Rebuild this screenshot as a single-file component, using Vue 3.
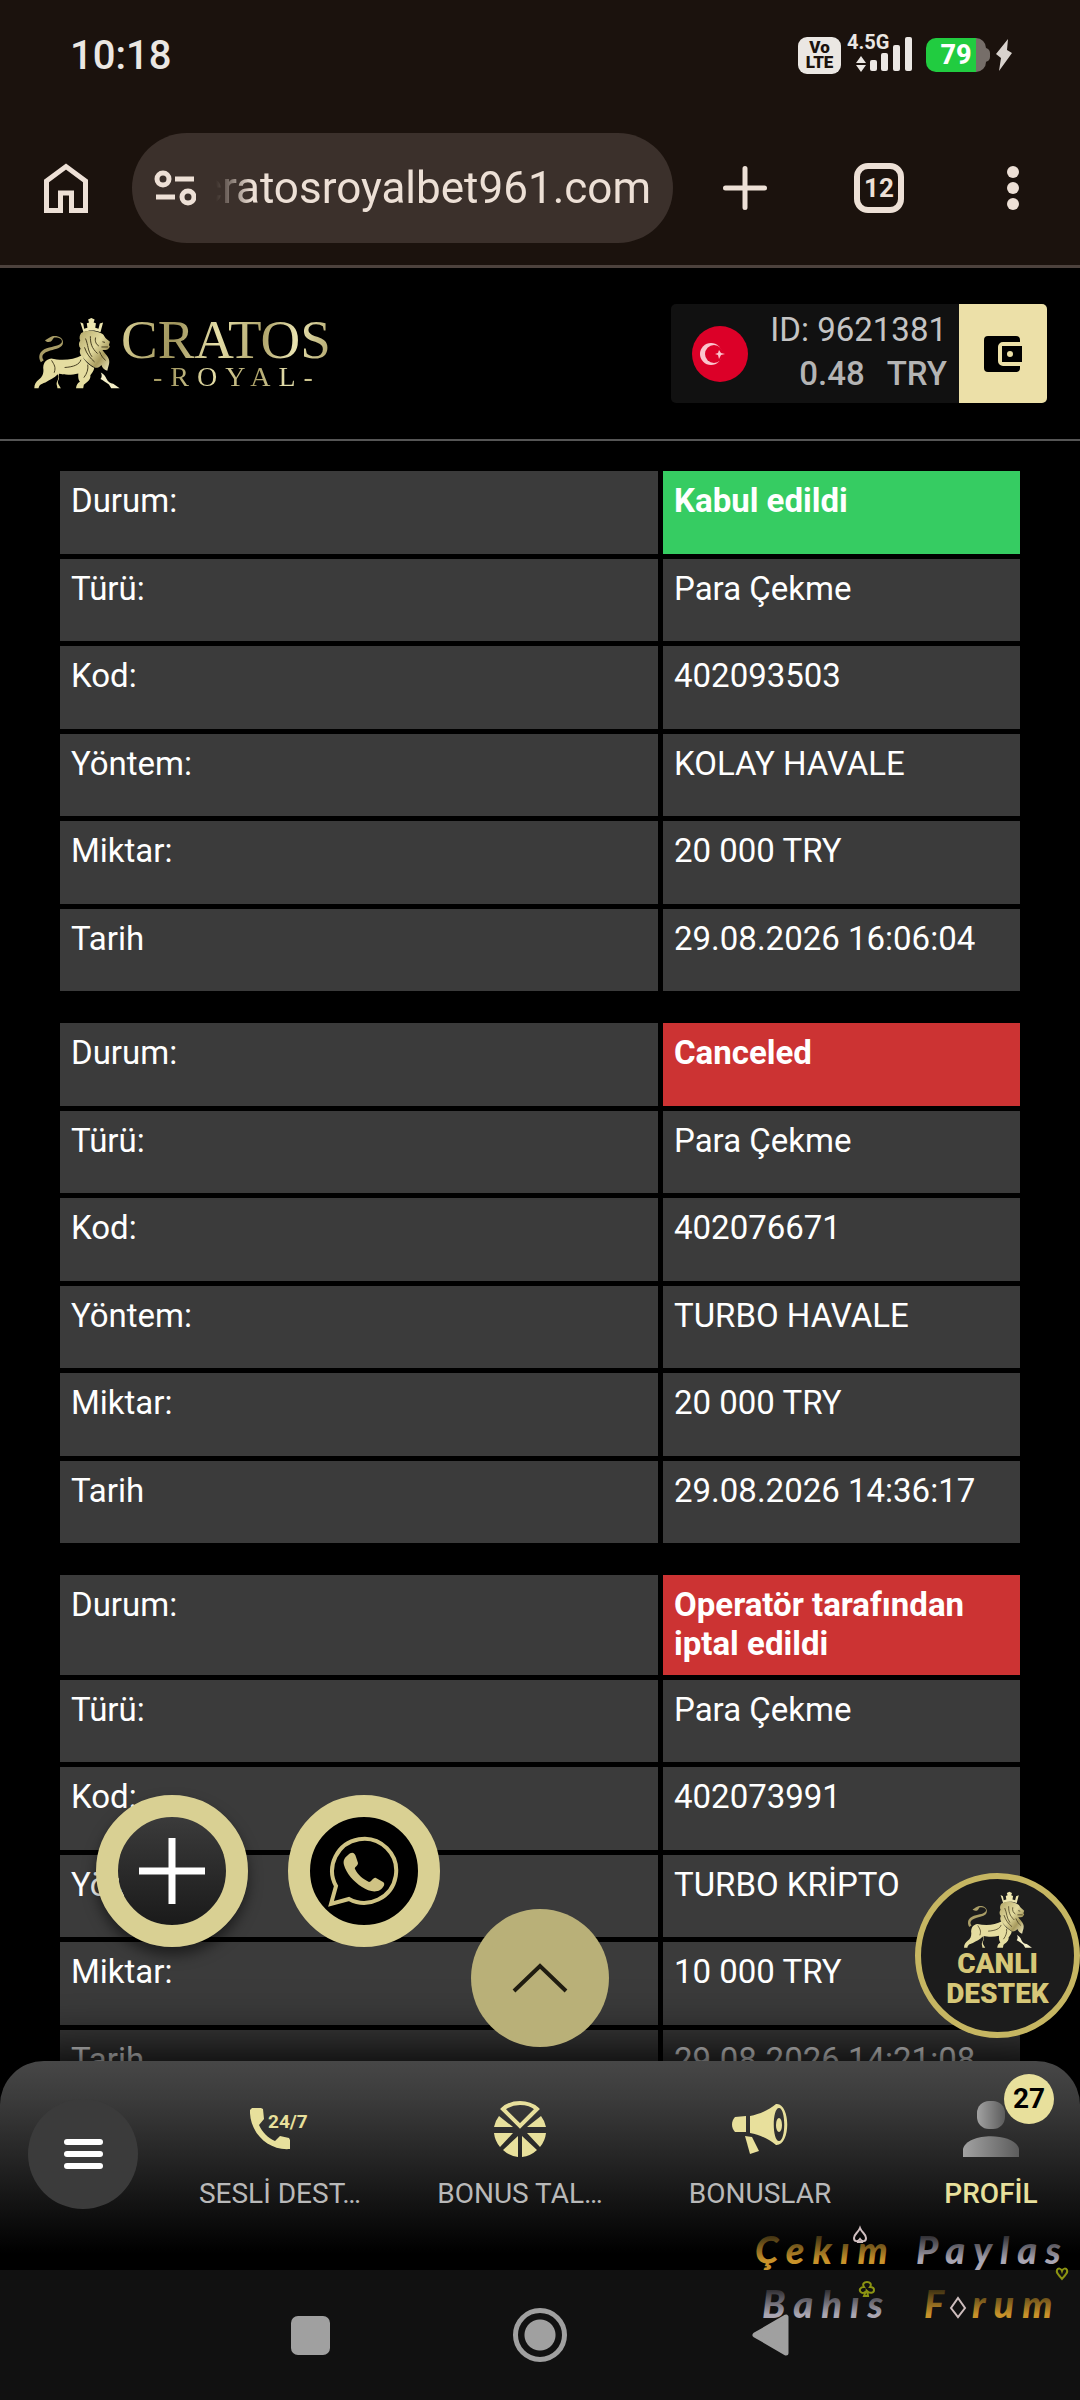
<template>
  <div class="screen">
    <!-- Shared lion artwork -->
    <svg class="defs" aria-hidden="true">
      <defs>
        <linearGradient id="gold" x1="0" y1="0" x2="1" y2="1">
          <stop offset="0" stop-color="#b3a768" />
          <stop offset="0.45" stop-color="#e4dca0" />
          <stop offset="0.7" stop-color="#a89b5e" />
          <stop offset="1" stop-color="#f3eec4" />
        </linearGradient>
        <symbol id="lion" viewBox="0 0 270 222">
          <path d="M145 15l9 4 3 16 10-3-2-14 7-2-3-9 10-5 10 5-3 9 7 2-2 14 10 3 4-16 10-3-8 30c-16-7-36-7-52 0z" fill="#eee7b0" />
          <path d="M24 138c-10-18-4-35 18-43 22-7 40-8 46-18 4-9-7-15-20-15-8 0-6 8-13 12-7 3-16 1-18-4 8-3 12-9 22-12 17-3 35 5 33 21-2 15-20 18-39 23-22 7-30 16-20 30z" fill="#a99d66" />
          <path d="M148 48c18-10 42-9 61 1 9 3 9 10 15 16l12 10-3 10 3 5-6 8c-7 3-12 3-17 2 9 13 22 22 21 37 0 9-4 15-6 27-8-3-16-9-18-18-5 6-10 9-19 9-12-6-26-17-37-31-10-8-13-18-8-28-7-9-6-18-1-25-4-7-2-17 3-23z" fill="url(#gold)" />
          <path d="M150 116c10 22 28 34 38 39-1 10-8 17-12 23 2 13-10 22-20 29l-2 11h-22c1-10 5-16 12-20-5-7-6-15-5-26-22 6-45 4-59 1-3 8 2 14-2 19-5 10 3 17 8 26H75c0-8-5-13-1-21 4-7 5-14 2-22-10 12-25 17-38 25-15 5-19 8-21 18H4c0-12 5-20 14-27 11-8 14-17 14-29-3-21 7-34 24-36 30 7 68 5 94-10z" fill="#e5dda0" />
          <path d="M208 169c9 4 15 12 17 19 5 11 12 14 21 16l20 14h-26l-7-12c-9-6-16-12-26-17 5-6 5-12 1-20z" fill="#f4efc8" />
          <path d="M161 65c9 20 6 37 20 56M176 58c0 20 3 36 22 53M192 62c-3 13 3 22 10 26M158 92c7 21 18 34 31 45M204 105c6 14 12 22 19 27M213 75l8 2M210 91h20M147 130c-4 15-22 22-50 24M57 132c8 14 14 20 8 38M168 145c2 14-2 27-12 40" fill="none" stroke="#453c20" stroke-width="3" />
        </symbol>
      </defs>
    </svg>

    <div class="status-bar">
      <span class="clock">10:18</span>
      <div class="status-icons">
        <span class="volte"><span>Vo</span><span>LTE</span></span>
        <svg width="66" height="56" viewBox="0 -8 66 56">
          <text x="0" y="14" class="net">4.5G</text>
          <g fill="#ebe7e3">
            <path d="M14 21l5 7H9zM14 37l5-7H9z" />
            <rect x="23" y="25" width="7" height="11" rx="2" />
            <rect x="34" y="18" width="7" height="18" rx="2" />
            <rect x="46" y="10" width="7" height="26" rx="2" />
            <rect x="58" y="2" width="7" height="34" rx="2" />
          </g>
        </svg>
        <div class="battery"><span>79</span></div>
        <svg width="16" height="32" viewBox="0 0 16 32">
          <path d="M12 0L0 15l5 4-2 13L16 14l-5-3z" fill="#d8d2cd" />
        </svg>
      </div>
    </div>

    <div class="toolbar">
      <button class="home" aria-label="Ana sayfa">
        <svg width="44" height="50" viewBox="0 0 44 50">
          <path d="M2.500 47.500V18L22 3.500 41.500 18v29.500H27.500V30H16.500v17.500z" fill="none" stroke="#ede0d6" stroke-width="5" />
        </svg>
      </button>
      <div class="omnibox">
        <svg width="42" height="36" viewBox="0 0 42 36">
          <g fill="none" stroke="#ede0d6" stroke-width="5">
            <circle cx="9" cy="9" r="6" />
            <circle cx="34" cy="27" r="6" />
            <path d="M21 9h19M2 27h19" />
          </g>
        </svg>
        <input type="text" aria-label="Adres" value="cratosroyalbet961.com" readonly />
      </div>
      <button class="tool" aria-label="Yeni sekme">
        <svg width="44" height="44" viewBox="0 0 44 44">
          <path d="M22 2.500v39M2.500 22h39" stroke="#ede0d6" stroke-width="5" stroke-linecap="round" />
        </svg>
      </button>
      <button class="tool" aria-label="Sekmeler"><span class="tabs">12</span></button>
      <button class="tool" aria-label="Menü">
        <svg width="12" height="44" viewBox="0 0 12 44" fill="#ede0d6">
          <circle cx="6" cy="6" r="6" />
          <circle cx="6" cy="22" r="6" />
          <circle cx="6" cy="38" r="6" />
        </svg>
      </button>
    </div>

    <div class="site">
      <header class="site-header">
        <a href="#" class="logo">
          <svg width="88" height="73"><use href="#lion" /></svg>
          <span class="logo-text">
            <span class="logo-name">CRATOS</span>
            <span class="logo-sub">-ROYAL-</span>
          </span>
        </a>
        <div class="account">
          <svg width="56" height="56" viewBox="0 0 56 56">
            <circle cx="28" cy="28" r="28" fill="#dc0028" />
            <circle cx="19" cy="28" r="11" fill="#fbc4cd" />
            <circle cx="22" cy="28" r="9" fill="#dc0028" />
            <path d="M33 28l-4-1-2-3-1 3-3 1 3 1 1 4 2-4z" fill="#fbc4cd" />
          </svg>
          <div class="account-text">
            <div>ID: 9621381</div>
            <div class="balance"><span>0.48</span><span>TRY</span></div>
          </div>
          <button class="wallet" aria-label="Cüzdan">
            <svg width="38" height="36" viewBox="0 0 38 36">
              <path d="M4 0h28a4 4 0 0 1 4 4v2H19a5 5 0 0 0-5 5v14a5 5 0 0 0 5 5h17v2a4 4 0 0 1-4 4H4a4 4 0 0 1-4-4V4a4 4 0 0 1 4-4z" />
              <path fill-rule="evenodd" d="M18 10h20v16H18zM26 15a3 3 0 1 0 0 6 3 3 0 0 0 0-6z" />
            </svg>
          </button>
        </div>
      </header>

      <main class="history">
        <table v-for="item in items" :key="item.code">
          <tbody>
            <tr>
              <th scope="row">Durum:</th>
              <td class="status" :class="item.ok ? 'ok' : 'fail'">{{ item.status }}</td>
            </tr>
            <tr v-for="row in rowsOf(item)" :key="row[0]">
              <th scope="row">{{ row[0] }}</th>
              <td>{{ row[1] }}</td>
            </tr>
          </tbody>
        </table>
      </main>

      <nav class="bottom-nav">
        <button class="menu" aria-label="Menü"><i></i><i></i><i></i></button>
        <a v-for="link in links" :key="link.label" href="#" class="nav-item" :class="{ active: link.active }">
          <span class="nav-icon">
            <svg v-if="link.icon === 'phone'" width="60" height="42" viewBox="0 0 60 42">
              <path d="M2 0h9l2 1 1 10-5 6c3 7 9 13 16 16l5-5 9 2 1 2v9c-22 2-41-17-40-39z" fill="#e8e09c" />
              <text x="18" y="20" class="hours">24/7</text>
            </svg>
            <svg v-else-if="link.icon === 'wheel'" width="52" height="56" viewBox="0 0 52 56">
              <g fill="#e8e09c">
                <path d="M5 15l14 11H0a26 26 0 0 1 5-11zM47 15L33 26h19a26 26 0 0 0-5-11zM0 32h19L6 46A26 26 0 0 1 0 32zM52 32H33l13 14a26 26 0 0 0 6-14zM9 49l15-14v21a26 26 0 0 1-15-7zM43 49L28 35v21a26 26 0 0 0 15-7z" />
              </g>
              <path d="M9 8C18 0 34 0 43 8L26 25z" fill="none" stroke="#e8e09c" stroke-width="4" />
            </svg>
            <svg v-else-if="link.icon === 'horn'" width="56" height="50" viewBox="0 0 56 50">
              <g fill="#e8e09c">
                <path d="M3 13l11-1v16H3c-4-4-4-11 0-15z" />
                <path fill-rule="evenodd" d="M18 12C29 10 38 5 44 0c15-1 15 42 0 41-7-6-16-10-26-12zM47 4c-7 0-7 33 0 33s7-33 0-33z" />
                <ellipse cx="47" cy="21" rx="3" ry="7" />
                <path d="M13 32l7 1 7 14-9 3z" />
              </g>
            </svg>
            <svg v-else width="56" height="56" viewBox="0 0 56 56">
              <linearGradient id="silver">
                <stop offset="0" stop-color="#a2a2a2" />
                <stop offset="1" stop-color="#5c5c5c" />
              </linearGradient>
              <rect x="14" y="0" width="28" height="28" rx="12" fill="url(#silver)" />
              <path d="M0 56V48C4 31 52 31 56 48v8z" fill="url(#silver)" />
            </svg>
            <span v-if="link.badge" class="badge">{{ link.badge }}</span>
          </span>
          <span>{{ link.label }}</span>
        </a>
      </nav>

      <button class="float add" aria-label="Ekle">
        <svg width="66" height="66" viewBox="0 0 66 66">
          <path d="M33 0v66M0 33h66" stroke="#fff" stroke-width="7" />
        </svg>
      </button>
      <button class="float whatsapp" aria-label="WhatsApp">
        <svg width="72" height="72" viewBox="0 0 72 72">
          <path d="M3 69l5-18A32 32 0 1 1 21 64z" fill="none" stroke="#cfc384" stroke-width="4" />
          <path d="M20 20c4-4 7-2 8 2l2 6c0 3-4 4-3 6 3 6 8 10 14 13 3 0 4-5 7-4l7 4c3 2 0 6-3 8-5 3-12 1-18-3-8-5-16-14-18-22-1-4 0-7 4-10z" fill="#cfc384" />
        </svg>
      </button>
      <button class="to-top" aria-label="Yukarı">
        <svg width="56" height="30" viewBox="0 0 56 30">
          <path d="M2 28L28 3l26 25" fill="none" stroke="#1f1c10" stroke-width="4" />
        </svg>
      </button>
      <button class="live">
        <svg width="70" height="58"><use href="#lion" /></svg>
        <span>CANLI</span>
        <span>DESTEK</span>
      </button>
    </div>

    <div class="system-nav">
      <button aria-label="Son uygulamalar"><span class="square"></span></button>
      <button aria-label="Ana ekran"><span class="circle"></span></button>
      <button aria-label="Geri">
        <svg width="37" height="42" viewBox="0 0 37 42">
          <path d="M34 3v36L3 21z" fill="#a0a0a0" stroke="#a0a0a0" stroke-width="5" stroke-linejoin="round" />
        </svg>
      </button>
    </div>

    <svg class="watermark" width="330" height="120" viewBox="0 0 330 120">
      <defs>
        <linearGradient id="wmGold" x1="0" y1="0" x2="0" y2="1">
          <stop offset="0.2" stop-color="#3b2f12" />
          <stop offset="0.75" stop-color="#c8922a" />
        </linearGradient>
        <linearGradient id="wmSilver" x1="0" y1="0" x2="0" y2="1">
          <stop offset="0.2" stop-color="#2c2b2f" />
          <stop offset="0.75" stop-color="#aaa6b2" />
        </linearGradient>
      </defs>
      <text x="5" y="44" class="script" fill="url(#wmGold)">Çekım</text>
      <text x="166" y="44" class="script" fill="url(#wmSilver)">Paylas</text>
      <text x="12" y="98" class="script" fill="url(#wmSilver)">Bahıs</text>
      <text x="174" y="98" class="script" fill="url(#wmGold)">F</text>
      <text x="222" y="98" class="script" fill="url(#wmGold)">rum</text>
      <!-- Card suits -->
      <g fill="none" stroke-width="2">
        <path d="M110 8c-2 5-6 6-6 10s4 4 6 1c2 3 6 3 6-1s-4-5-6-10zM107 22h6" stroke="#d0bfc0" />
        <path d="M312 59c-4-5-6-6-5-9 1-2 4-2 5 1 1-3 4-3 5-1 1 3-1 4-5 9z" stroke="#8c9412" />
        <path d="M116 71c-3 4-7 1-6-2 1-2 3-2 4-2-2-3 0-5 3-5s5 2 3 5c1 0 4 0 4 3s-4 4-7 1l1 5h-4z" stroke="#8c9412" />
        <path d="M208 78l7 10-7 9-7-9z" stroke="#cdbdbd" />
      </g>
    </svg>
  </div>
</template>

<script setup>

    // Çekim geçmişi
    const items = [
        { ok: true, status: 'Kabul edildi', code: '402093503', method: 'KOLAY HAVALE', amount: '20 000 TRY', date: '29.08.2026 16:06:04' },
        { ok: false, status: 'Canceled', code: '402076671', method: 'TURBO HAVALE', amount: '20 000 TRY', date: '29.08.2026 14:36:17' },
        { ok: false, status: 'Operatör tarafından iptal edildi', code: '402073991', method: 'TURBO KRİPTO', amount: '10 000 TRY', date: '29.08.2026 14:21:08' }
    ];

    const rowsOf = (item) => [
        ['Türü:', 'Para Çekme'],
        ['Kod:', item.code],
        ['Yöntem:', item.method],
        ['Miktar:', item.amount],
        ['Tarih', item.date]
    ];

    // Alt menü
    const links = [
        { icon: 'phone', label: 'SESLİ DEST…' },
        { icon: 'wheel', label: 'BONUS TAL…' },
        { icon: 'horn', label: 'BONUSLAR' },
        { icon: 'user', label: 'PROFİL', badge: 27, active: true }
    ];

</script>

<style>
    body {
        margin: 0;
        background: #000;
    }
</style>

<style scoped>

    .screen {
        position: relative;
        display: flex;
        flex-direction: column;
        height: 100vh;
        overflow: hidden;
        background: #000;
        color: #fff;
        font-family: Roboto, "Liberation Sans", sans-serif;
    }

    .defs {
        position: absolute;
        width: 0;
        height: 0;
    }

    button {
        display: flex;
        align-items: center;
        justify-content: center;
        padding: 0;
        border: 0;
        background: none;
        font-family: inherit;
    }

    a {
        color: inherit;
        text-decoration: none;
    }

    /* Status bar */
    .status-bar {
        display: flex;
        flex: none;
        align-items: center;
        justify-content: space-between;
        height: 110px;
        padding: 0 68px 0 70px;
        background: #1b120d;
    }

    .clock {
        font-size: 40px;
        font-weight: 500;
        color: #ebe7e3;
    }

    .status-icons {
        display: flex;
        align-items: center;
    }

    .volte {
        display: flex;
        flex-direction: column;
        align-items: center;
        justify-content: center;
        width: 43px;
        height: 37px;
        margin-right: 6px;
        border-radius: 9px;
        background: #ebe7e3;
        color: #1b120d;
        font-size: 17px;
        font-weight: 900;
        line-height: 15px;
    }

    .net {
        font-size: 20px;
        font-weight: 700;
        fill: #ebe7e3;
    }

    .battery {
        position: relative;
        width: 60px;
        height: 34px;
        margin: 0 10px 0 13px;
        border-radius: 10px;
        background: linear-gradient(90deg, #21cc40 50px, #766e69 50px);
        text-align: center;
        font-size: 27px;
        font-weight: 800;
        line-height: 34px;
    }

    .battery::after {
        content: "";
        position: absolute;
        top: 10px;
        right: -4px;
        width: 5px;
        height: 14px;
        border-radius: 0 5px 5px 0;
        background: #766e69;
    }

    /* Browser toolbar */
    .toolbar {
        display: flex;
        flex: none;
        align-items: center;
        height: 155px;
        border-bottom: 3px solid #4d423d;
        background: #1b120d;
    }

    .home {
        margin: 0 44px;
    }

    .omnibox {
        display: flex;
        flex: 1;
        align-items: center;
        min-width: 0;
        height: 110px;
        margin-right: 5px;
        padding: 0 22px;
        border-radius: 55px;
        background: #3b302b;
    }

    .omnibox svg {
        flex: none;
    }

    .omnibox input {
        flex: 1;
        min-width: 0;
        padding: 0;
        border: 0;
        outline: 0;
        background: none;
        color: #ede0d6;
        font-family: inherit;
        font-size: 44px;
        text-align: right;
        mask-image: linear-gradient(90deg, transparent 20px, #000 56px);
    }

    .tool {
        width: 134px;
        height: 110px;
    }

    .tabs {
        box-sizing: border-box;
        width: 50px;
        height: 50px;
        border: 6px solid #ede0d6;
        border-radius: 14px;
        color: #ede0d6;
        font-size: 26px;
        font-weight: 700;
        line-height: 38px;
        text-align: center;
    }

    /* Site */
    .site {
        position: relative;
        flex: 1;
        min-height: 0;
        overflow: hidden;
    }

    .site-header {
        display: flex;
        align-items: center;
        justify-content: space-between;
        height: 171px;
        padding: 0 33px;
        border-bottom: 2px solid #555;
    }

    .logo {
        display: flex;
        align-items: center;
    }

    .logo-text {
        display: flex;
        flex-direction: column;
        align-items: center;
        font-family: "Liberation Serif", serif;
        color: transparent;
        background: linear-gradient(100deg, #d8cf94, #9f945c 25%, #e6dfa8 45%, #aea36a 65%, #e9e3b0 80%, #a99d64);
        background-clip: text;
    }

    .logo-name {
        font-size: 55px;
        line-height: 46px;
    }

    .logo-sub {
        padding-left: 22px;
        font-size: 28px;
        line-height: 28px;
        letter-spacing: 8px;
    }

    .account {
        display: flex;
        align-items: center;
        height: 99px;
        padding-left: 21px;
        border-radius: 5px;
        background: #111;
        overflow: hidden;
    }

    .account-text {
        padding: 0 12px 4px 22px;
        color: #c4c4c4;
        font-size: 33px;
        line-height: 44px;
        text-align: right;
    }

    .balance {
        display: flex;
        justify-content: flex-end;
        gap: 22px;
        color: #b4b4b4;
        font-weight: 500;
    }

    .wallet {
        width: 88px;
        height: 100%;
        background: #ece0a8;
    }

    /* History tables */
    .history {
        padding: 25px 55px 0;
    }

    table {
        width: 100%;
        margin-bottom: 22px;
        table-layout: fixed;
        border-collapse: separate;
        border-spacing: 5px;
        font-size: 33px;
        line-height: 39px;
    }

    th,
    td {
        box-sizing: border-box;
        height: 83px;
        padding: 10px 11px 12px;
        background: #3b3b3b;
        font-weight: 400;
        text-align: left;
        vertical-align: top;
    }

    th {
        width: 598px;
    }

    tr:nth-child(even) > * {
        height: 82px;
    }

    .status {
        font-weight: 700;
    }

    .status.ok {
        background: #36cc62;
    }

    .status.fail {
        background: #cc3333;
    }

    /* Bottom navigation */
    .bottom-nav {
        position: absolute;
        right: 0;
        bottom: 0;
        left: 0;
        display: grid;
        grid-template-columns: 160px 6fr 6fr 6fr 5fr;
        height: 209px;
        border-radius: 44px 44px 0 0;
        background: linear-gradient(#474747, #3c3c3c 17%, #222 50%, #000 92%);
        box-shadow: 0 0 60px 10px #000;
    }

    .menu {
        flex-direction: column;
        gap: 6px;
        width: 110px;
        height: 110px;
        margin: 38px 0 0 28px;
        border-radius: 50%;
        background: #3b3b3b;
    }

    .menu i {
        width: 39px;
        height: 6px;
        border-radius: 3px;
        background: #fff;
    }

    .nav-item {
        display: flex;
        flex-direction: column;
        align-items: center;
        padding-top: 38px;
        color: #b9b9b9;
        font-size: 28px;
        line-height: 34px;
        white-space: nowrap;
    }

    .nav-item:last-child {
        padding-left: 22px;
    }

    .nav-item.active {
        color: #e8e09c;
        font-weight: 500;
    }

    .nav-icon {
        position: relative;
        display: flex;
        align-items: center;
        height: 60px;
        margin-bottom: 18px;
    }

    .hours {
        font-size: 19px;
        font-weight: 700;
        fill: #e8e09c;
    }

    .badge {
        position: absolute;
        top: -25px;
        left: 41px;
        width: 50px;
        height: 50px;
        border-radius: 50%;
        background: #e8e09c;
        color: #000;
        font-size: 28px;
        font-weight: 700;
        line-height: 50px;
        text-align: center;
    }

    /* Floating buttons */
    .float {
        position: absolute;
        bottom: 323px;
        box-sizing: border-box;
        width: 152px;
        height: 152px;
        border: 22px solid #d9d093;
        border-radius: 50%;
    }

    .add {
        left: 96px;
        background: linear-gradient(#3b3b3b, #1a1a1a) padding-box;
        box-shadow: 0 8px 14px rgba(0, 0, 0, 0.5);
    }

    .whatsapp {
        left: 288px;
        background: #000;
    }

    .to-top {
        position: absolute;
        bottom: 223px;
        left: calc(50% - 69px);
        width: 138px;
        height: 138px;
        border-radius: 50%;
        background: #b9b078;
    }

    .live {
        position: absolute;
        right: 0;
        bottom: 232px;
        flex-direction: column;
        box-sizing: border-box;
        width: 165px;
        height: 165px;
        padding-bottom: 12px;
        border: 6px solid #c6b662;
        border-radius: 50%;
        background: #1c1c1c;
        color: #d6c778;
        font-size: 28px;
        font-weight: 900;
        line-height: 30px;
    }

    /* System navigation */
    .system-nav {
        display: flex;
        flex: none;
        align-items: center;
        justify-content: center;
        height: 130px;
        background: #111;
    }

    .system-nav button {
        width: 230px;
        height: 100%;
    }

    .square {
        width: 39px;
        height: 39px;
        border-radius: 7px;
        background: #a0a0a0;
    }

    .circle {
        box-sizing: border-box;
        width: 54px;
        height: 54px;
        border: 5px solid #a0a0a0;
        border-radius: 50%;
        background: radial-gradient(#a0a0a0 15px, transparent 16px);
    }

    .watermark {
        position: absolute;
        right: 0;
        bottom: 60px;
        pointer-events: none;
    }

    .script {
        font-family: Lato, sans-serif;
        font-size: 38px;
        font-style: italic;
        font-weight: 900;
        letter-spacing: 8px;
    }
</style>
